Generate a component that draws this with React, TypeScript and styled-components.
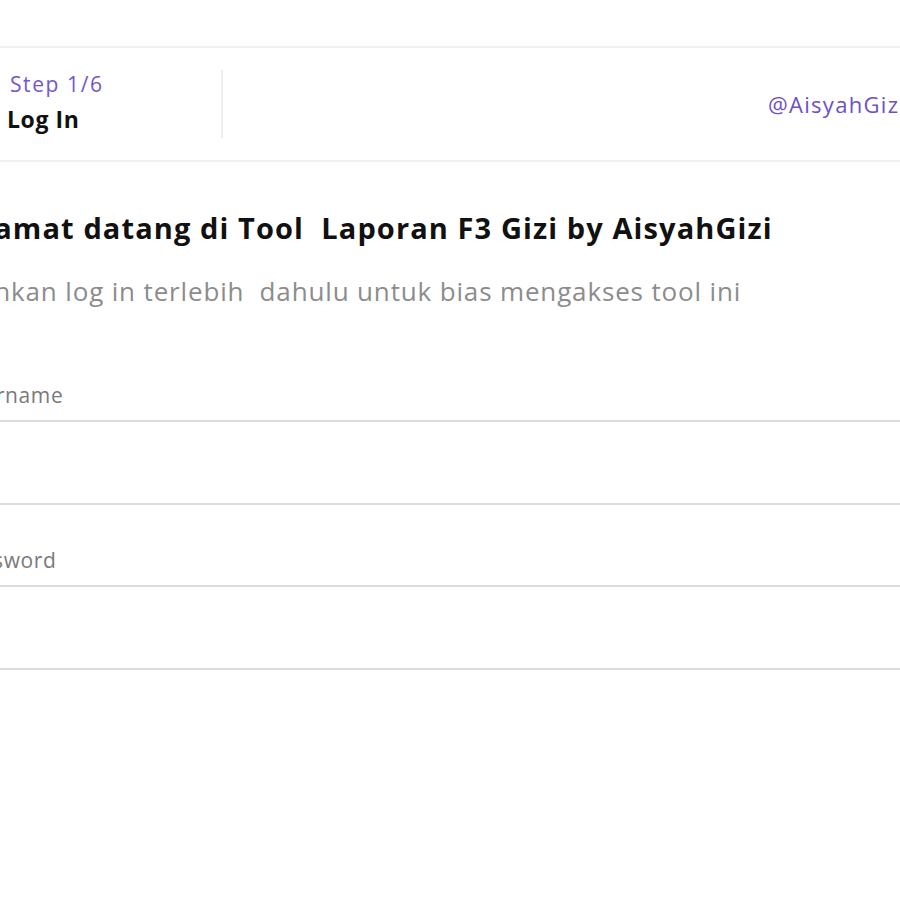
import React from "react";
import styled, { createGlobalStyle } from "styled-components";

const Global = createGlobalStyle`
  html, body { margin: 0; padding: 0; background: #fff; overflow: hidden; }
  body { font-family: "Open Sans", Lato, sans-serif; }
`;

const Page = styled.div`
  width: 900px;
  height: 900px;
  padding-top: 46px;
  box-sizing: border-box;
  overflow: hidden;
`;

const Header = styled.header`
  display: flex;
  align-items: center;
  height: 116px;
  box-sizing: border-box;
  border-top: 2px solid #f0f0f0;
  border-bottom: 2px solid #f0f0f0;
`;

const StepBlock = styled.div`
  width: 214px;
  flex: none;
  padding-left: 7px;
  height: 68px;
  display: flex;
  flex-direction: column;
  justify-content: center;
  border-right: 2px solid #efefef;
`;

const StepText = styled.div`
  color: #7256cf;
  font-size: 21px;
  letter-spacing: 1.6px;
  line-height: 30px;
  padding-left: 3px;
`;

const StepTitle = styled.div`
  color: #111;
  font-size: 23px;
  letter-spacing: 0.6px;
  font-weight: 700;
  line-height: 40px;
`;

const Handle = styled.div`
  margin-left: 545px;
  color: #6c4fc9;
  font-size: 22px;
  letter-spacing: 1.3px;
  white-space: nowrap;
`;

const Body = styled.main`
  margin-left: -51px;
  width: 1000px;
  padding-top: 44px;
`;

const Title = styled.h1`
  margin: 0;
  font-size: 29px;
  letter-spacing: 1.1px;
  font-weight: 700;
  color: #111;
  line-height: 44px;
  white-space: pre;
`;

const Subtitle = styled.p`
  margin: 21px 0 0;
  font-size: 26px;
  letter-spacing: 0.85px;
  color: #8c8c8c;
  line-height: 40px;
  white-space: pre;
`;

const Field = styled.div`
  display: flex;
  flex-direction: column;
  margin-top: ${(p: { $top: number }) => p.$top}px;
`;

const Label = styled.label`
  padding-left: 8px;
  font-size: 21px;
  letter-spacing: 0.6px;
  color: #7a7a7a;
  line-height: 28px;
  margin-bottom: 11px;
`;

const Input = styled.input`
  height: 85px;
  box-sizing: border-box;
  border: 2px solid #dcdcdc;
  background: #fff;
  outline: none;
  font-size: 20px;
  padding: 0 16px;
`;

export default function App() {
  return (
    <Page>
      <Global />
      <Header>
        <StepBlock>
          <StepText>Step 1/6</StepText>
          <StepTitle>Log In</StepTitle>
        </StepBlock>
        <Handle>@AisyahGizi</Handle>
      </Header>
      <Body>
        <Title>{"Selamat datang di Tool  Laporan F3 Gizi by AisyahGizi"}</Title>
        <Subtitle>{"Silahkan log in terlebih  dahulu untuk bias mengakses tool ini"}</Subtitle>
        <Field $top={70}>
          <Label>Username</Label>
          <Input type="text" />
        </Field>
        <Field $top={41}>
          <Label>Password</Label>
          <Input type="password" />
        </Field>
      </Body>
    </Page>
  );
}
